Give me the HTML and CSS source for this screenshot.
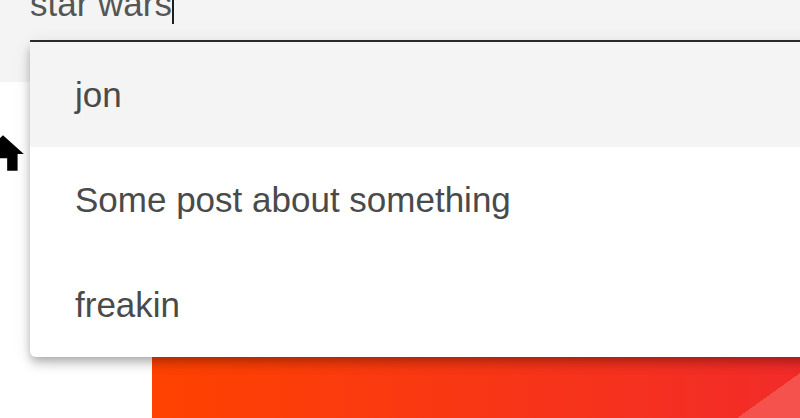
FILE: index.html
```html
<!DOCTYPE html>
<html lang="en">
<head>
<meta charset="utf-8">
<title>Search</title>
<link rel="stylesheet" href="styles.css">
</head>
<body>
<div class="page">
  <header class="field">
    <div class="input-wrap">
      <span class="input-text">star wars</span><span class="caret"></span>
    </div>
  </header>
  <main class="content">
    <svg class="home-icon" viewBox="0 0 24 24" aria-hidden="true"><path d="M10 20v-6h4v6h5v-8h3L12 3 2 12h3v8z"/></svg>
    <div class="banner"></div>
  </main>
  <ul class="menu">
    <li class="option active">jon</li>
    <li class="option">Some post about something</li>
    <li class="option">freakin</li>
  </ul>
</div>
</body>
</html>
```
FILE: styles.css
```css
html, body {
  margin: 0;
  padding: 0;
  width: 800px;
  height: 418px;
  overflow: hidden;
  background: #ffffff;
}

.page {
  position: relative;
  width: 800px;
  height: 418px;
  overflow: hidden;
  font-family: "Liberation Sans", Arial, sans-serif;
}

.field {
  height: 82px;
  background: #f4f4f4;
  padding-left: 30px;
  box-sizing: border-box;
}

.input-wrap {
  display: flex;
  align-items: flex-start;
  height: 40px;
  border-bottom: 2px solid #2e2e2e;
  overflow: hidden;
}

.input-text {
  font-size: 35px;
  line-height: 40px;
  margin-top: -16px;
  color: #555555;
}

.caret {
  width: 2px;
  height: 24px;
  background: #1e1e1e;
}

.content {
  display: flex;
  align-items: flex-start;
}

.home-icon {
  width: 50px;
  height: 50px;
  margin-left: -22px;
  margin-top: 47px;
  fill: #000000;
  flex: none;
}

.banner {
  flex: 1;
  margin-left: 124px;
  margin-top: 218px;
  height: 118px;
  background:
    linear-gradient(144.5deg, rgba(245, 80, 77, 0) 435.8px, #f5524e 435.8px),
    linear-gradient(to right, #ff4200, #f22b2a);
}

.menu {
  position: absolute;
  left: 30px;
  top: 42px;
  width: 800px;
  margin: 0;
  padding: 0;
  list-style: none;
  background: #ffffff;
  border-radius: 0 0 6px 6px;
  box-shadow: 0 4px 9px -2px rgba(0, 0, 0, 0.22), 0 8px 11px 0 rgba(0, 0, 0, 0.12), 0 2px 18px 0 rgba(0, 0, 0, 0.1);
}

.option {
  display: flex;
  align-items: center;
  height: 105px;
  padding-left: 45px;
  font-size: 35px;
  color: #4a4a4a;
}

.option.active {
  background: #f4f4f4;
}
```
